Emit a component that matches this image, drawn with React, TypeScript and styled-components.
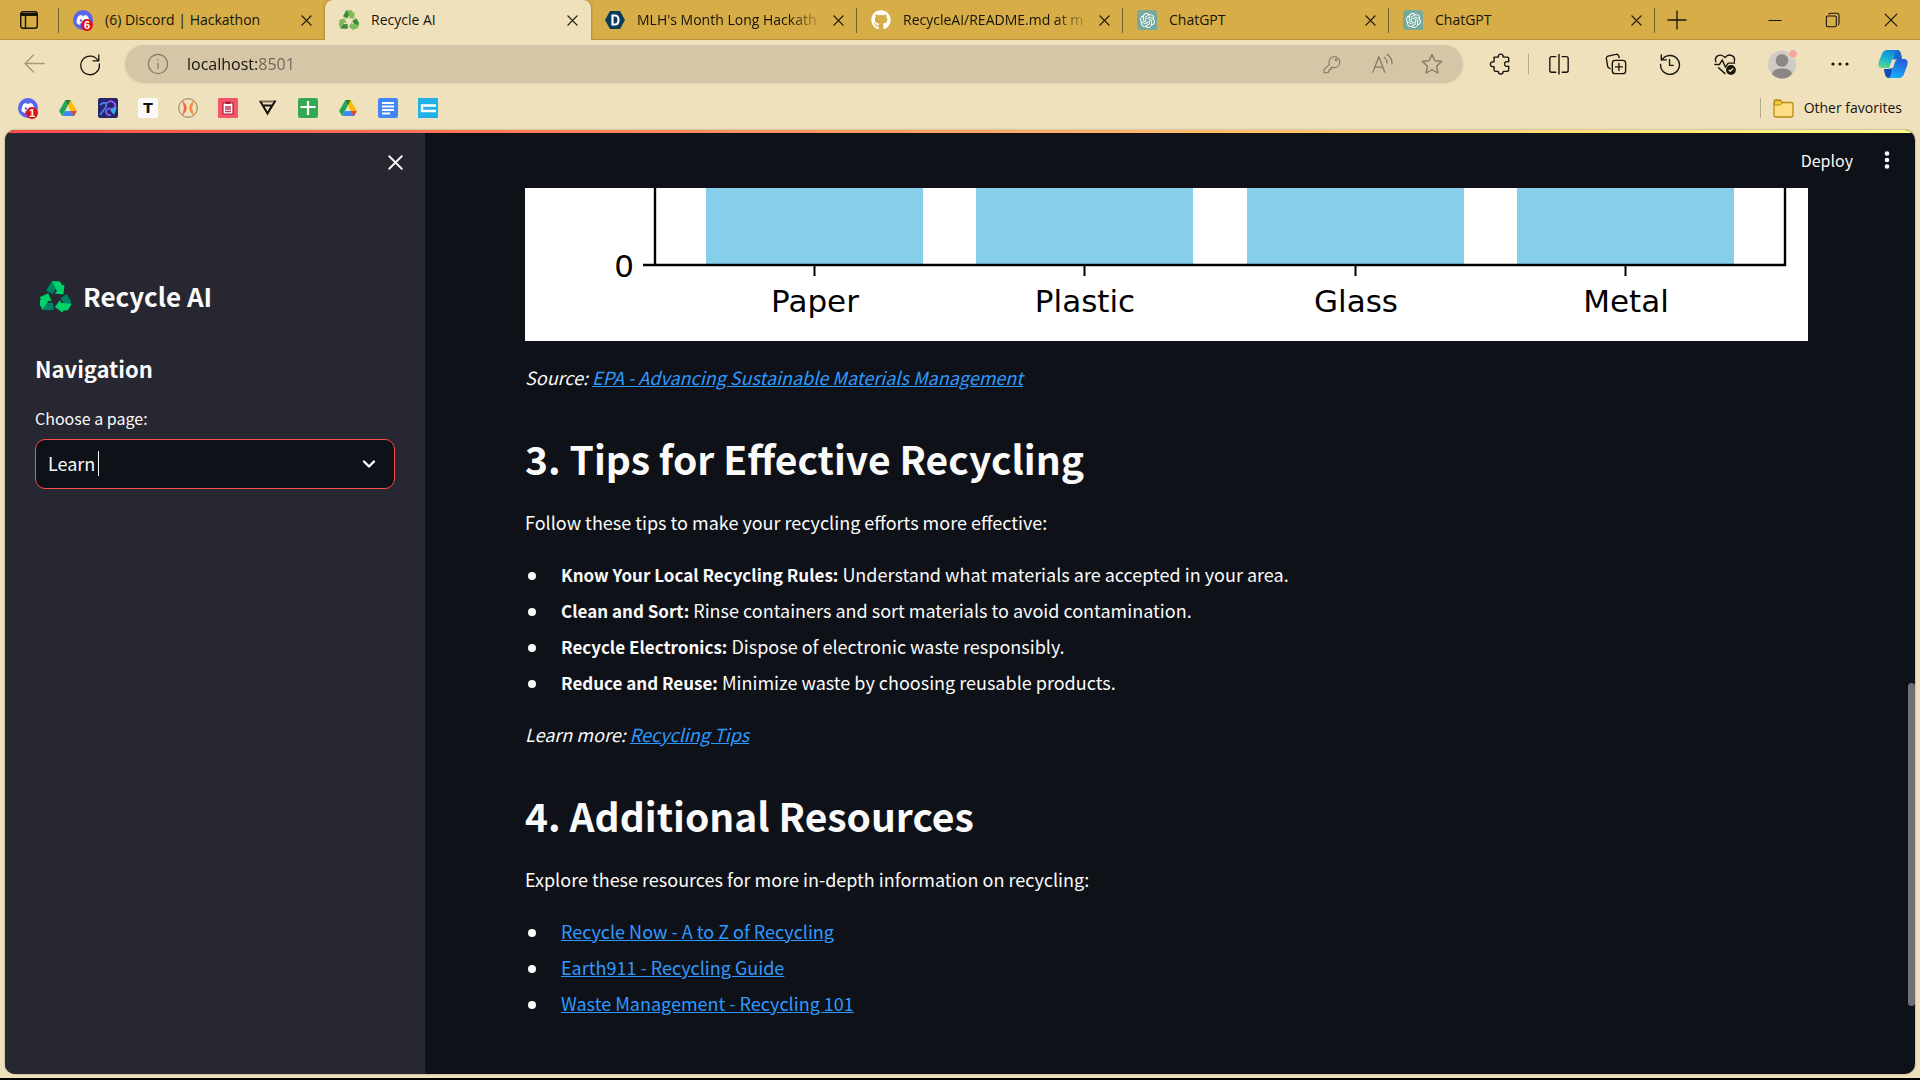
import React from 'react';
import styled, { createGlobalStyle, css } from 'styled-components';
import { FaDiscord, FaGithub } from 'react-icons/fa';
import { SiOpenai } from 'react-icons/si';

const uiFont = '"Open Sans", "Noto Sans", sans-serif';
const appFont = '"Noto Sans CJK SC", "Noto Sans", sans-serif';

const GlobalStyle = createGlobalStyle`
  * { box-sizing: border-box; }
  html, body, #root { height: 100%; }
  body { margin: 0; background: #000; overflow: hidden; }
  button { font: inherit; color: inherit; background: none; border: 0; padding: 0; cursor: pointer; }
  svg { display: block; flex: none; }
`;

/* ---------- browser chrome ---------- */

const Window = styled.div`
  height: 100%;
  border-bottom: 2px solid #000;
  background: #efe1bc;
  display: flex;
  flex-direction: column;
  font-family: ${uiFont};
  color: #17140c;
`;

const TabStrip = styled.header`
  display: flex;
  flex: none;
  height: 40px;
  background: #d6ad46;
  box-shadow: inset 0 -1px #b8913a;
`;

const IconButton = styled.button<{ $w: number }>`
  width: ${(p) => p.$w}px;
  flex: none;
  display: flex;
  align-items: center;
  justify-content: center;
`;

const Divider = styled.span<{ $h: number; $dark?: boolean }>`
  width: 1px;
  height: ${(p) => p.$h}px;
  flex: none;
  align-self: center;
  background: ${(p) => (p.$dark ? '#73602c' : '#b5ab8e')};
`;

const TabList = styled.nav`
  display: flex;
  flex: 0 1 1596px;
  min-width: 0;
`;

const Tab = styled.div<{ $active?: boolean; $divider?: boolean }>`
  flex: 1 1 0;
  min-width: 0;
  display: flex;
  align-items: center;
  gap: 12px;
  padding: 0 10px 0 14px;
  font-size: 14px;
  line-height: 20px;
  background: linear-gradient(#73602c, #73602c) right center / ${(p) => (p.$divider ? '1px' : '0')} 25px no-repeat;
  ${(p) =>
    p.$active &&
    css`
      background: #efe1bc;
      border-radius: 8px 8px 0 0;
      box-shadow: 0 0 3px #8f712a;
      clip-path: inset(0 -3px 0 -3px);
    `}
`;

const TabTitle = styled.button<{ $fade?: boolean }>`
  flex: 1;
  min-width: 0;
  white-space: nowrap;
  text-align: left;
  ${(p) => p.$fade && css`mask-image: linear-gradient(90deg, #000 84%, transparent 104%);`}
`;

const Badged = styled.span`
  position: relative;
  width: 20px;
  height: 20px;
  flex: none;
  display: flex;
  align-items: center;
  justify-content: center;
  border-radius: 50%;
  background: #5865f2;
  color: #fff;
`;

const Badge = styled.span`
  position: absolute;
  right: 0;
  bottom: -1px;
  width: 12px;
  height: 12px;
  border-radius: 50%;
  background: #e0101a;
  font: bold 11px/12px "Liberation Sans", sans-serif;
  text-align: center;
`;

const WindowControls = styled.div`
  display: flex;
  margin-left: auto;
`;

const Toolbar = styled.div`
  display: flex;
  flex: none;
  align-items: center;
  height: 48px;
  padding-left: 7px;
`;

const AddressBar = styled.div`
  flex: 1;
  display: flex;
  align-items: center;
  height: 38px;
  margin: 0 8px;
  padding: 0 6px 0 22px;
  border-radius: 19px;
  background: #d4c6a6;
  box-shadow: 0 1px 3px #e0d2ae;
  color: #807863;
`;

const AddressInput = styled.input`
  flex: 1;
  min-width: 0;
  margin-left: 18px;
  padding: 0;
  border: 0;
  outline: 0;
  font: 16px/24px ${uiFont};
  color: transparent;
  background: linear-gradient(90deg, #17140c 70px, #6b675c 70px);
  background-clip: text;
`;

const Bookmarks = styled.nav`
  display: flex;
  flex: none;
  align-items: center;
  height: 42px;
  padding: 0 18px 2px 8px;
`;

const Bookmark = styled.a`
  width: 40px;
  height: 28px;
  display: flex;
  align-items: center;
  justify-content: center;
  color: inherit;
  text-decoration: none;
`;

const Tile = styled.span<{ $bg: string; $fg?: string }>`
  width: 20px;
  height: 20px;
  border-radius: 2px;
  background: ${(p) => p.$bg};
  color: ${(p) => p.$fg || '#fff'};
  font: bold 14px/20px "DejaVu Sans", sans-serif;
  text-align: center;
`;

const Favorites = styled.button`
  display: flex;
  align-items: center;
  gap: 10px;
  margin-left: 12px;
  font-size: 14px;
  line-height: 20px;
`;

const Spacer = styled.span`
  flex: 1;
`;

/* ---------- page ---------- */

const Page = styled.div`
  flex: 1;
  min-height: 0;
  margin: 0 5px 4px;
  border-radius: 10px;
  overflow: hidden;
  display: flex;
  flex-direction: column;
  background: #0e1117;
  color: #fafafa;
  font-family: ${appFont};
  box-shadow: 0 0 2px #8d8468;
`;

const Decoration = styled.div`
  height: 3px;
  flex: none;
  background: linear-gradient(90deg, #ff4b4b, #fffd80);
`;

const Columns = styled.div`
  flex: 1;
  min-height: 0;
  display: flex;
`;

const Sidebar = styled.aside`
  width: 420px;
  flex: none;
  padding: 14px 30px;
  background: #262730;
  display: flex;
  flex-direction: column;
`;

const CloseSidebar = styled.button`
  align-self: flex-end;
  margin-right: -10px;
  width: 20px;
  height: 30px;
  display: flex;
  align-items: center;
  justify-content: center;
`;

const Brand = styled.h2`
  display: flex;
  align-items: center;
  gap: 12px;
  margin: 99px 0 0 5px;
  font-size: 26px;
  line-height: 40px;
  font-weight: 600;
`;

const NavTitle = styled.h3`
  margin: 36px 0 0;
  font-size: 22px;
  line-height: 32px;
  font-weight: 600;
`;

const Label = styled.label`
  margin-top: 20px;
  font-size: 16px;
  line-height: 28px;
`;

const SelectBox = styled.div`
  position: relative;
  margin-top: 7px;

  svg { position: absolute; right: 19px; top: 18px; pointer-events: none; }
`;

const Select = styled.select`
  appearance: none;
  width: 100%;
  height: 50px;
  padding: 0 12px 2px;
  border: 1px solid #ff4b4b;
  border-radius: 10px;
  outline: 0;
  background: #0e1117;
  color: #fafafa;
  font: 18px/24px ${appFont};
`;

const Caret = styled.span`
  position: absolute;
  left: 63px;
  top: 12px;
  width: 1px;
  height: 25px;
  background: #fafafa;
`;

const Main = styled.main`
  flex: 1;
  min-width: 0;
  display: flex;
  flex-direction: column;
`;

const AppHeader = styled.header`
  height: 55px;
  flex: none;
  display: flex;
  align-items: center;
  justify-content: flex-end;
  gap: 30px;
  padding: 0 24px 2px 0;
  font-size: 16px;
  line-height: 24px;
`;

const ScrollArea = styled.div`
  flex: 1;
  min-height: 0;
  display: flex;
`;

const Article = styled.article`
  flex: 1;
  min-width: 0;
  padding: 0 100px;
  font-size: 18px;
  line-height: 32px;
`;

const Track = styled.div`
  width: 7px;
  flex: none;
  display: flex;
  flex-direction: column;
  padding-bottom: 68px;
`;

const Thumb = styled.span`
  margin-top: auto;
  height: 323px;
  border-radius: 4px;
  background: #6f7074;
`;

const Chart = styled.svg`
  width: 100%;
  height: auto;
  background: #fff;
  font: 31px "DejaVu Sans", sans-serif;
`;

const H1 = styled.h1`
  margin: 37px 0 20px;
  font-size: 39px;
  line-height: 56px;
  font-weight: 600;
`;

const P = styled.p<{ $italic?: boolean }>`
  margin: 20px 0 0;
  font-style: ${(p) => (p.$italic ? 'italic' : 'normal')};
`;

const List = styled.ul`
  display: flex;
  flex-direction: column;
  gap: 4px;
  margin: 20px 0 0;
  padding: 0 0 0 36px;
  list-style: none;

  li::before {
    content: "";
    display: inline-block;
    width: 8px;
    height: 8px;
    margin: 0 25px 0 -33px;
    border-radius: 50%;
    background: currentColor;
    vertical-align: 2px;
  }
  strong { font-size: 17px; line-height: 20px; font-weight: 600; }
`;

const Link = styled.a`
  color: #2e9aff;
  text-decoration: underline;
`;

/* ---------- icons ---------- */

const Stroke = ({ size = 22, w = 1.3, children }: { size?: number; w?: number; children: React.ReactNode }) => (
  <svg width={size} height={size} viewBox="0 0 24 24" fill="none" stroke="currentColor" strokeWidth={w} strokeLinecap="round" strokeLinejoin="round">
    {children}
  </svg>
);

const Cross = ({ size = 12, w = 1.4 }: { size?: number; w?: number }) => (
  <svg width={size} height={size} viewBox="0 0 12 12" stroke="currentColor" strokeWidth={w} strokeLinecap="round">
    <path d="M1 1l10 10M11 1L1 11" />
  </svg>
);

const Dash = () => (
  <svg width="14" height="14" viewBox="0 0 14 14" stroke="currentColor">
    <path d="M0.5 7.5H13.5" />
  </svg>
);

const BackArrow = () => (
  <svg width="22" height="20" viewBox="0 0 22 20" fill="none" stroke="#a3987a" strokeWidth="1.3" strokeLinecap="round" strokeLinejoin="round">
    <path d="M20 9.5H1M9.500 1L1 9.500L9.500 18" />
  </svg>
);

const Dots = () => (
  <svg width="18" height="4" viewBox="0 0 18 4" fill="currentColor">
    <circle cx="2" cy="2" r="1.6" />
    <circle cx="9" cy="2" r="1.6" />
    <circle cx="16" cy="2" r="1.6" />
  </svg>
);

const Recycle = ({ size, light, dark }: { size: number; light: string; dark: string }) => (
  <svg width={size} height={size} viewBox="0 0 90 90">
    {[0, 120, 240].map((a) => (
      <g key={a} transform={`rotate(${a} 45 50)`}>
        <path d="M18 28L31 5Q35 0 40 1L50 14L37 38Z" fill={dark} />
        <path d="M34 1H54Q58 1 61 6L65 13L71 10L68 39L42 36L49 30L41 13Q38 5 34 1Z" fill={light} />
      </g>
    ))}
  </svg>
);

const DiscordIcon = ({ count }: { count: number }) => (
  <Badged>
    <FaDiscord size={14} />
    <Badge>{count}</Badge>
  </Badged>
);

const Drive = () => (
  <svg width="18" height="16" viewBox="0 0 20 18">
    <path d="M7 0L0 12.3L3.4 18L10 6Z" fill="#21a55b" />
    <path d="M7 0H13L20 12.3H13.2Z" fill="#fbbc04" />
    <path d="M6.7 12.3H20L16.7 18H3.4Z" fill="#4285f4" />
    <path d="M13.2 12.3H20L16.7 18Z" fill="#ea4335" />
    <path d="M7 0H13L10 6Z" fill="#188038" />
  </svg>
);

const OpenAITile = styled(Tile)`
  display: flex;
  align-items: center;
  justify-content: center;
  flex: none;
  border-radius: 4px 4px 0 4px;
`;

const GptIcon = () => (
  <OpenAITile $bg="#75a99c">
    <SiOpenai size={15} />
  </OpenAITile>
);

const MlhIcon = () => (
  <svg width="20" height="20" viewBox="0 0 20 20">
    <path d="M5 1H15L20 10L15 19H5L0 10Z" fill="#0b3c5d" />
    <path d="M7.5 5.5h2.5q3.500 0 3.500 4.500t-3.500 4.500h-2.500z" fill="none" stroke="#fff" strokeWidth="2.2" />
  </svg>
);

const Copilot = () => (
  <svg width="30" height="28" viewBox="0 0 30 28">
    <defs>
      <linearGradient id="ribbonTop" x1="0.6" y1="0" x2="0.2" y2="1">
        <stop offset="0" stopColor="#1583d8" />
        <stop offset="0.5" stopColor="#19b3cf" />
        <stop offset="1" stopColor="#5fd68a" />
      </linearGradient>
      <linearGradient id="ribbonBottom" x1="0.8" y1="0" x2="0.3" y2="1">
        <stop offset="0" stopColor="#2456d8" />
        <stop offset="1" stopColor="#17b5f5" />
      </linearGradient>
    </defs>
    <path d="M9 0H19Q22 0 23 4L24 9H20Q17 9 16 12L14 18H4Q-1 18 1 11L4 4Q5.5 0 9 0Z" fill="url(#ribbonTop)" />
    <path d="M19 0Q22 0 23 4L24 9H20Q17 9 16 12Q16 3 19 0Z" fill="#1668c9" />
    <path d="M21 28H11Q8 28 7 24L6 19H10Q13 19 14 15L16 9H26Q31 9 29 16L26 24Q24.5 28 21 28Z" fill="url(#ribbonBottom)" />
    <path d="M11 28Q8 28 7 24L6 19H10Q13 19 14 15Q14 25 11 28Z" fill="#1747b8" />
    <path d="M14 9.500H19Q17.500 10 17 12L15.500 16.500Q14.500 18.500 13 18.500H11Z" fill="#efe1bc" />
  </svg>
);

/* ---------- data ---------- */

const tabs = [
  { title: '(6) Discord | Hackathon', icon: <DiscordIcon count={6} /> },
  { title: 'Recycle AI', icon: <Recycle size={20} light="#7dbb5c" dark="#3d8b3a" />, active: true },
  { title: "MLH's Month Long Hackath", icon: <MlhIcon />, divider: true, fade: true },
  { title: 'RecycleAI/README.md at m', icon: <FaGithub size={20} color="#fff" />, divider: true, fade: true },
  { title: 'ChatGPT', icon: <GptIcon />, divider: true },
  { title: 'ChatGPT', icon: <GptIcon />, divider: true },
];

const bookmarks: [string, React.ReactNode][] = [
  ['Discord', <DiscordIcon count={1} />],
  ['Drive', <Drive />],
  ['Art', (
    <svg width="20" height="20" viewBox="0 0 20 20">
      <rect width="20" height="20" rx="2" fill="#27246b" />
      <path d="M2 7Q5 4 8 5Q9 9 5 13L2 17" fill="none" stroke="#4f7cf0" strokeWidth="1.8" />
      <path d="M9 5Q14 1 17 6Q18 10 14 11Q9 9 8 14Q9 18 13 17" fill="none" stroke="#8b5cf0" strokeWidth="1.8" />
      <path d="M12 12L19 9L16 17Z" fill="#27b8e8" />
    </svg>
  )],
  ['Typing', <Tile $bg="#fafafa" $fg="#111">T</Tile>],
  ['Hands', (
    <svg width="20" height="20" viewBox="0 0 20 20" fill="none">
      <circle cx="10" cy="10" r="9.3" stroke="#8a7c66" />
      <path d="M5 3.500Q11.500 10 5 16.500Q8 10 5 3.500Z" fill="#f0563e" stroke="#f0663e" />
      <path d="M15 3.500Q8.500 10 15 16.500Q12 10 15 3.500Z" fill="#f58a3c" stroke="#f58a3c" />
    </svg>
  )],
  ['PDF', (
    <svg width="20" height="20" viewBox="0 0 20 20">
      <rect width="20" height="20" rx="1" fill="#f9566a" />
      <path d="M5 5H15V16H5Z" fill="#fff" stroke="#a81f38" strokeWidth="1.2" />
      <path d="M7.5 3.5H12.500V6H7.500Z" fill="#a81f38" />
      <path d="M7 9H13M7 11H13M7 13.500H13" stroke="#c23a50" strokeWidth="1.3" />
    </svg>
  )],
  ['Vector', (
    <svg width="18" height="16" viewBox="0 0 18 16" fill="none" strokeWidth="2">
      <path d="M0 1.500H16" stroke="#77705e" />
      <path d="M3 5.500H13L8.500 13.500L1.500 1.500M8.500 13.500L16.500 0.500" stroke="#17140c" />
    </svg>
  )],
  ['Sheets', (
    <svg width="20" height="20" viewBox="0 0 20 20">
      <rect width="20" height="20" rx="2" fill="#34a853" />
      <path d="M10 3V17M2.500 9H17.500" stroke="#fff" strokeWidth="2.2" />
    </svg>
  )],
  ['Drive', <Drive />],
  ['Docs', (
    <svg width="20" height="20" viewBox="0 0 20 20">
      <rect width="20" height="20" rx="2" fill="#4285f4" />
      <path d="M4 5H16M4 8.500H16M4 12H16M4 15.500H12" stroke="#fff" strokeWidth="1.8" />
    </svg>
  )],
  ['Cards', (
    <svg width="20" height="20" viewBox="0 0 20 20">
      <rect width="20" height="20" fill="#21b1e6" />
      <path d="M18 7.500H4V13H18" fill="none" stroke="#fff" strokeWidth="2.4" />
    </svg>
  )],
];

const tips = [
  ['Know Your Local Recycling Rules:', 'Understand what materials are accepted in your area.'],
  ['Clean and Sort:', 'Rinse containers and sort materials to avoid contamination.'],
  ['Recycle Electronics:', 'Dispose of electronic waste responsibly.'],
  ['Reduce and Reuse:', 'Minimize waste by choosing reusable products.'],
];

const resources = ['Recycle Now - A to Z of Recycling', 'Earth911 - Recycling Guide', 'Waste Management - Recycling 101'];

const bars = [
  { label: 'Paper', x: 181 },
  { label: 'Plastic', x: 451 },
  { label: 'Glass', x: 722 },
  { label: 'Metal', x: 992 },
];

const MaterialsChart = () => (
  <Chart viewBox="0 0 1283 153" role="img" aria-label="Recycled materials">
    {bars.map((b) => (
      <g key={b.label}>
        <rect x={b.x} y="0" width="217" height="77" fill="#87ceeb" />
        <path d={`M${b.x + 108.5} 77V88`} stroke="#000" strokeWidth="2" />
        <text x={b.x + 109} y="124" textAnchor="middle">{b.label}</text>
      </g>
    ))}
    <path d="M130 0V78M1260 0V78M118 77H1261" stroke="#000" strokeWidth="2.4" fill="none" />
    <text x="99" y="89" textAnchor="middle">0</text>
  </Chart>
);

export default function App() {
  return (
    <Window>
      <GlobalStyle />
      <TabStrip>
        <IconButton $w={58} aria-label="Tab actions">
          <svg width="18" height="18" viewBox="0 0 18 18">
            <rect x="0.7" y="0.7" width="16.6" height="16.6" rx="2.5" fill="none" stroke="#17140c" strokeWidth="1.4" />
            <path d="M1 2H17V5H1Z" fill="#17140c" />
            <path d="M5.500 5V17" stroke="#17140c" strokeWidth="1.4" />
          </svg>
        </IconButton>
        <Divider $h={25} $dark />
        <TabList>
          {tabs.map((t, i) => (
            <Tab key={i} $active={t.active} $divider={t.divider}>
              {t.icon}
              <TabTitle $fade={t.fade}>{t.title}</TabTitle>
              <IconButton $w={18} aria-label="Close tab"><Cross size={11} /></IconButton>
            </Tab>
          ))}
        </TabList>
        <IconButton $w={43} aria-label="New tab"><Stroke size={24}><path d="M3 12H21M12 3V21" /></Stroke></IconButton>
        <WindowControls>
          <IconButton $w={58} aria-label="Minimize"><Dash /></IconButton>
          <IconButton $w={58} aria-label="Restore">
            <Stroke size={16} w={1.6}><path d="M2 8Q2 6 4 6H15Q17 6 17 8V20Q17 22 15 22H4Q2 22 2 20ZM6 3Q7 2 9 2H18Q21 2 21 5V17Q21 18 20 19" /></Stroke>
          </IconButton>
          <IconButton $w={58} aria-label="Close window"><Cross size={14} w={1} /></IconButton>
        </WindowControls>
      </TabStrip>

      <Toolbar>
        <IconButton $w={55} aria-label="Back"><BackArrow /></IconButton>
        <IconButton $w={55} aria-label="Refresh">
          <Stroke size={24}><path d="M20 8.500A9.300 9.300 0 1 0 21.300 12M20.800 3V8.800H15" /></Stroke>
        </IconButton>
        <AddressBar>
          <Stroke><circle cx="12" cy="12" r="10.5" /><path d="M12 11V17M12 7.200V7.800" /></Stroke>
          <AddressInput aria-label="Address" defaultValue="localhost:8501" />
          <IconButton $w={50} aria-label="Passwords">
            <Stroke size={20}><path d="M9 12.500A6.500 6.500 0 1 1 13 16L11 16V18.500H8.500V21L7 22.500H2.500V18.500Z" /><circle cx="17" cy="7" r="1" /></Stroke>
          </IconButton>
          <IconButton $w={50} aria-label="Read aloud">
            <Stroke><path d="M2 21L8.500 4L15 21M4.300 15.500H12.700M14.500 4.500Q17.500 7 17.500 11M17.500 1.500Q23 5 23 12" /></Stroke>
          </IconButton>
          <IconButton $w={50} aria-label="Favorite">
            <Stroke size={24}><path d="M12 2.500L14.900 8.700L21.500 9.500L16.600 14.200L17.900 21L12 17.700L6.100 21L7.400 14.200L2.500 9.500L9.100 8.700Z" /></Stroke>
          </IconButton>
        </AddressBar>
        <IconButton $w={57} aria-label="Extensions">
          <Stroke size={22} w={1.5}><path d="M5.500 4.500H10Q10 1.200 12.800 1.200T15.600 4.500H20Q21.500 4.500 21.500 6V9.500Q17 8.800 17 12T21.500 14.500V18Q21.500 20 20 20H15.600Q15.600 23 12.800 23T10 20H7Q5.500 20 5.500 18V15Q1.500 15 1.500 12.200T5.500 9.500Z" /></Stroke>
        </IconButton>
        <Divider $h={20} />
        <IconButton $w={60} aria-label="Split screen">
          <Stroke w={1.5}><path d="M8.500 4H4Q2 4 2 6V19Q2 21 4 21H8.500M15.500 4H20Q22 4 22 6V19Q22 21 20 21H15.500M12 1.500V23" /></Stroke>
        </IconButton>
        <IconButton $w={53} aria-label="Collections">
          <Stroke w={1.5}><rect x="8" y="8" width="14.5" height="14.5" rx="3" /><path d="M15.200 11.500V19M11.500 15.200H19M5.500 17L4.500 16.500Q3 16 2.800 14L1.500 6Q1.200 4 3.200 3.400L12 1.500Q14 1 14.800 3L15.500 5" /></Stroke>
        </IconButton>
        <IconButton $w={55} aria-label="History">
          <Stroke w={1.5}><path d="M2.500 2V7.500H8M3.300 7.500A10.300 10.300 0 1 1 1.700 12.500M11.500 7V13.500H15.500" /></Stroke>
        </IconButton>
        <IconButton $w={55} aria-label="Browser essentials">
          <Stroke w={1.5}>
            <path d="M2 9.500Q0.500 4.500 4.500 2.800T12 5Q15.500 1 19.500 2.800T22 9.500M1 12.500H6L9 7.500L12.500 15.500L15.500 11H22.500M5 16L12 22.500" />
            <circle cx="18.5" cy="18.5" r="4.6" fill="currentColor" />
            <path d="M16.500 18.700L17.800 20L20.500 17.200" stroke="#efe1bc" />
          </Stroke>
        </IconButton>
        <IconButton $w={61} aria-label="Profile">
          <svg width="30" height="30" viewBox="0 0 30 30">
            <circle cx="14" cy="15.5" r="14" fill="#cfccc8" />
            <circle cx="14" cy="11.5" r="6.3" fill="#8a8785" />
            <path d="M4 25Q5 19.500 14 19.500T24 25Q20 29.500 14 29.500T4 25Z" fill="#8a8785" />
            <circle cx="25" cy="5" r="4.4" fill="#f7a3a0" stroke="#efe1bc" />
          </svg>
        </IconButton>
        <IconButton $w={53} aria-label="Settings and more"><Dots /></IconButton>
        <IconButton $w={54} aria-label="Copilot"><Copilot /></IconButton>
      </Toolbar>

      <Bookmarks>
        {bookmarks.map(([name, icon], i) => (
          <Bookmark key={i} href="#" aria-label={name}>{icon}</Bookmark>
        ))}
        <Spacer />
        <Divider $h={20} />
        <Favorites>
          <svg width="21" height="19" viewBox="0 0 21 19">
            <path d="M1 3Q1 1 3 1H7L9.500 3.500H18Q20 3.500 20 5.500V16Q20 18 18 18H3Q1 18 1 16Z" fill="#ffdf86" stroke="#b98a14" strokeWidth="1.3" />
            <path d="M1.500 6H7L9.500 3.800L7 1.500H3Q1.500 1.500 1.500 3Z" fill="#f5c73a" stroke="#b98a14" />
          </svg>
          Other favorites
        </Favorites>
      </Bookmarks>

      <Page>
        <Decoration />
        <Columns>
          <Sidebar>
            <CloseSidebar aria-label="Close sidebar"><Cross size={15} w={1.5} /></CloseSidebar>
            <Brand><Recycle size={31} light="#00d26a" dark="#008463" />Recycle AI</Brand>
            <NavTitle>Navigation</NavTitle>
            <Label htmlFor="page">Choose a page:</Label>
            <SelectBox>
              <Select id="page" defaultValue="Learn"><option>Learn</option></Select>
              <Caret />
              <svg width="14" height="14" viewBox="0 0 14 14" fill="none" stroke="currentColor" strokeWidth="2.4" strokeLinecap="round" strokeLinejoin="round">
                <path d="M2 4.500L7 9.500L12 4.500" />
              </svg>
            </SelectBox>
          </Sidebar>
          <Main>
            <AppHeader>
              <button>Deploy</button>
              <button aria-label="Main menu">
                <svg width="8" height="18" viewBox="0 0 8 18" fill="currentColor">
                  <circle cx="4" cy="2.5" r="2.3" /><circle cx="4" cy="9" r="2.3" /><circle cx="4" cy="15.5" r="2.3" />
                </svg>
              </button>
            </AppHeader>
            <ScrollArea>
              <Article>
                <MaterialsChart />
                <P $italic>Source: <Link href="#">EPA - Advancing Sustainable Materials Management</Link></P>
                <H1>3. Tips for Effective Recycling</H1>
                <P>Follow these tips to make your recycling efforts more effective:</P>
                <List>
                  {tips.map(([head, body]) => (
                    <li key={head}><strong>{head}</strong> {body}</li>
                  ))}
                </List>
                <P $italic>Learn more: <Link href="#">Recycling Tips</Link></P>
                <H1>4. Additional Resources</H1>
                <P>Explore these resources for more in-depth information on recycling:</P>
                <List>
                  {resources.map((r) => (
                    <li key={r}><Link href="#">{r}</Link></li>
                  ))}
                </List>
              </Article>
              <Track><Thumb /></Track>
            </ScrollArea>
          </Main>
        </Columns>
      </Page>
    </Window>
  );
}
